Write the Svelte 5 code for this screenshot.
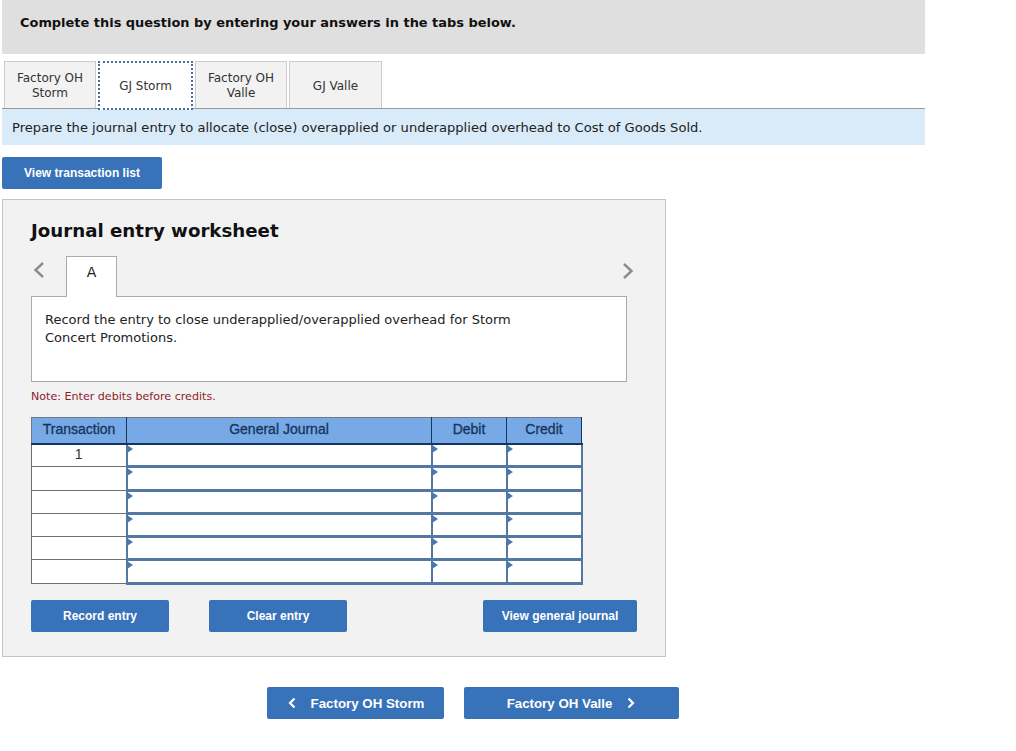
<script lang="ts">
    const tabs = [
        { label: "Factory OH Storm", active: false },
        { label: "GJ Storm", active: true },
        { label: "Factory OH Valle", active: false },
        { label: "GJ Valle", active: false },
    ];

    const rows = ["1", "", "", "", "", ""];
</script>

<div class="page">
    <div class="banner">Complete this question by entering your answers in the tabs below.</div>

    <div class="tabs">
        {#each tabs as tab}
            <div class="tab" class:tab--active={tab.active}><span>{tab.label}</span></div>
        {/each}
    </div>

    <div class="prompt">Prepare the journal entry to allocate (close) overapplied or underapplied overhead to Cost of Goods Sold.</div>

    <button class="btn btn--list">View transaction list</button>

    <section class="panel">
        <h2 class="panel__title">Journal entry worksheet</h2>

        <div class="steps">
            <svg class="chevron" width="14" height="18" viewBox="0 0 14 18">
                <path d="M11 2 L3.5 9 L11 16" />
            </svg>
            <div class="step">A</div>
            <svg class="chevron chevron--next" width="14" height="18" viewBox="0 0 14 18">
                <path d="M3 2 L10.5 9 L3 16" />
            </svg>
        </div>

        <div class="entry">Record the entry to close underapplied/overapplied overhead for Storm Concert Promotions.</div>

        <p class="note">Note: Enter debits before credits.</p>

        <table class="journal">
            <thead>
                <tr>
                    <th class="col-trans">Transaction</th>
                    <th class="col-account">General Journal</th>
                    <th class="col-money">Debit</th>
                    <th class="col-money">Credit</th>
                </tr>
            </thead>
            <tbody>
                {#each rows as row}
                    <tr>
                        <td class="trans">{row}</td>
                        <td class="field"><i></i></td>
                        <td class="field"><i></i></td>
                        <td class="field"><i></i></td>
                    </tr>
                {/each}
            </tbody>
        </table>

        <div class="actions">
            <button class="btn btn--record">Record entry</button>
            <button class="btn btn--clear">Clear entry</button>
            <button class="btn btn--journal">View general journal</button>
        </div>
    </section>

    <div class="pager">
        <button class="btn btn--prev">
            <svg width="10" height="12" viewBox="0 0 10 12"><path d="M7.5 1.5 L3 6 L7.5 10.5" /></svg>
            Factory OH Storm
        </button>
        <button class="btn btn--next">
            Factory OH Valle
            <svg width="10" height="12" viewBox="0 0 10 12"><path d="M2.5 1.5 L7 6 L2.5 10.5" /></svg>
        </button>
    </div>
</div>

<style>
    :global(body) {
        margin: 0;
        background: #fff;
    }

    .page {
        width: 1016px;
        height: 751px;
        padding-left: 2px;
        box-sizing: border-box;
        font-family: "DejaVu Sans", Verdana, sans-serif;
        font-size: 12px;
        color: #222;
        overflow: hidden;
    }

    .banner {
        width: 923px;
        height: 54px;
        box-sizing: border-box;
        padding: 15px 0 0 18px;
        background: #dfdfdf;
        color: #111;
        font-size: 12.95px;
        font-weight: 700;
        line-height: 16px;
    }

    .tabs {
        display: flex;
        width: 923px;
        height: 48px;
        box-sizing: border-box;
        margin-top: 7px;
        padding-left: 2px;
        gap: 3px;
        border-bottom: 1px solid #999;
    }

    .tab {
        display: flex;
        align-items: center;
        justify-content: center;
        width: 92px;
        height: 47px;
        box-sizing: border-box;
        padding-top: 2px;
        background: #f2f2f2;
        border: 1px solid #ccc;
        border-bottom: none;
        text-align: center;
        line-height: 15px;
        color: #333;
    }

    .tab:last-child {
        width: 93px;
        margin-left: -1px;
    }

    .tab span {
        display: block;
        width: 76px;
    }

    .tab--active {
        width: 95px;
        height: 49px;
        margin: 0 -1px 0 -1px;
        background: #fff;
        border: 2px dotted #4a6c9c;
    }

    .prompt {
        width: 923px;
        height: 36px;
        box-sizing: border-box;
        padding-left: 10px;
        background: #d9eaf8;
        font-size: 13.1px;
        line-height: 37px;
        color: #222;
    }

    .btn {
        display: block;
        height: 32px;
        padding: 0;
        background: #3872b8;
        border: none;
        border-radius: 2px;
        color: #fff;
        font-family: "Liberation Sans", Arial, sans-serif;
        font-size: 12px;
        font-weight: 700;
    }

    .btn--list {
        width: 160px;
        margin-top: 12px;
    }

    .panel {
        width: 664px;
        height: 458px;
        box-sizing: border-box;
        margin-top: 10px;
        padding: 0 38px 0 28px;
        background: #f2f2f2;
        border: 1px solid #c4c4c4;
    }

    .panel__title {
        margin: 0;
        padding-top: 19px;
        color: #111;
        font-size: 18.2px;
        font-weight: 700;
        line-height: 23px;
    }

    .steps {
        display: flex;
        align-items: flex-start;
        height: 41px;
        margin-top: 14px;
        position: relative;
        z-index: 1;
    }

    .chevron {
        margin-top: 5px;
        margin-left: 1px;
    }

    .chevron path {
        fill: none;
        stroke: #8c8c8c;
        stroke-width: 2.4;
    }

    .chevron--next {
        margin-left: auto;
        margin-right: -8px;
        margin-top: 6px;
    }

    .step {
        width: 51px;
        height: 41px;
        box-sizing: border-box;
        margin-left: 20px;
        padding-top: 7px;
        background: #fff;
        border: 1px solid #aaa;
        border-bottom: none;
        text-align: center;
        font-size: 14px;
        line-height: 16px;
    }

    .entry {
        width: 596px;
        height: 86px;
        box-sizing: border-box;
        margin-top: -1px;
        padding: 14px 100px 0 13px;
        background: #fff;
        border: 1px solid #aaa;
        font-size: 13px;
        line-height: 18px;
    }

    .note {
        margin: 8px 0 0;
        color: #8e1b2d;
        font-size: 11.1px;
        line-height: 14px;
    }

    .journal {
        width: 550px;
        margin-top: 13px;
        table-layout: fixed;
        border-collapse: collapse;
        font-family: "Liberation Sans", Arial, sans-serif;
        font-size: 14px;
    }

    .journal th,
    .journal td {
        box-sizing: border-box;
    }

    .journal th {
        height: 26px;
        padding: 0 0 3px;
        background: #76a9e5;
        border: 1px solid #6e7a88;
        border-bottom: 2px solid #14365c;
        border-right-color: #14365c;
        color: #16345a;
        font-weight: 400;
        -webkit-text-stroke: 0.3px #16345a;
    }

    .col-trans {
        width: 95px;
    }

    .col-account {
        width: 305px;
    }

    .col-money {
        width: 75px;
    }

    .journal td {
        height: 23.3px;
        padding: 0;
        background: #fff;
    }

    .trans {
        border: 1px solid #6d6d78;
        text-align: center;
        color: #333;
    }

    .journal td.trans {
        padding-bottom: 3px;
    }

    .field {
        position: relative;
        border: 2px solid #5378a4;
        border-top-width: 1px;
        border-bottom-width: 3px;
    }

    .field i {
        position: absolute;
        top: 0;
        left: -1px;
        border-left: 6px solid #4a78ad;
        border-top: 4px solid transparent;
        border-bottom: 4px solid transparent;
    }

    .actions {
        display: flex;
        width: 606px;
        margin-top: 15px;
    }

    .btn--record {
        width: 138px;
    }

    .btn--clear {
        width: 138px;
        margin-left: 40px;
    }

    .btn--journal {
        width: 154px;
        margin-left: 136px;
    }

    .pager {
        display: flex;
        gap: 20px;
        margin: 30px 0 0 265px;
    }

    .pager .btn {
        display: flex;
        align-items: center;
        justify-content: center;
        gap: 14px;
        font-size: 13.3px;
    }

    .pager svg path {
        fill: none;
        stroke: #fff;
        stroke-width: 2.2;
    }

    .btn--prev {
        width: 177px;
    }

    .btn--next {
        width: 215px;
    }
</style>
